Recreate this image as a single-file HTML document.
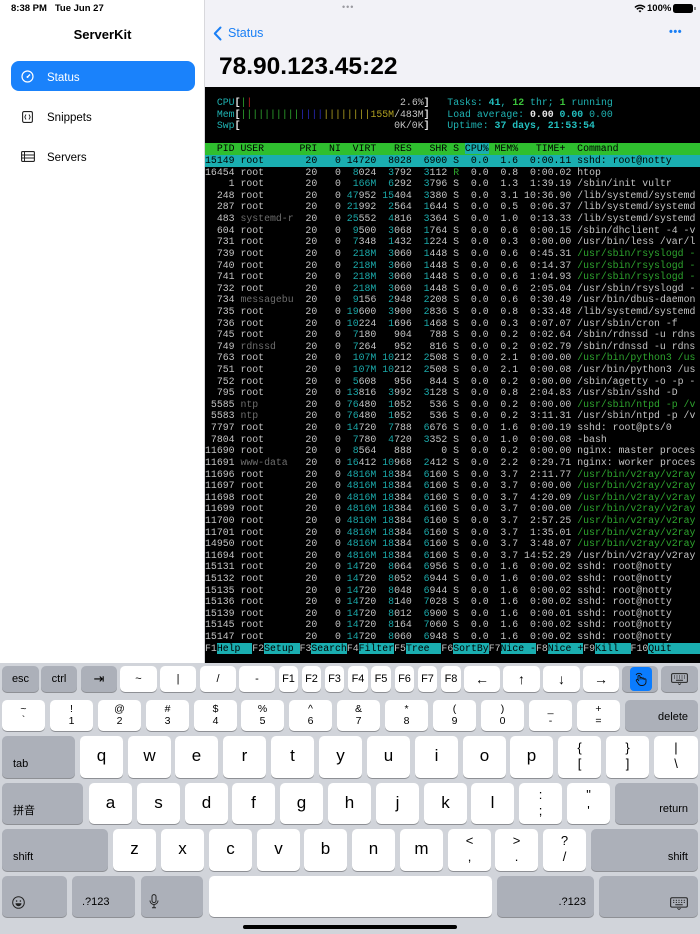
<!DOCTYPE html>
<html><head><meta charset="utf-8">
<style>
*{margin:0;padding:0;box-sizing:border-box}
body{width:700px;height:934px;overflow:hidden;position:relative;background:#f2f2f7;font-family:"Liberation Sans","Noto Sans CJK SC",sans-serif;color:#000}
.abs{position:absolute}
#side{left:0;top:0;width:205px;height:663px;background:#fff;border-right:1px solid #d8d8dc}
#term{left:205px;top:87px;width:495px;height:576px;background:#000;overflow:hidden}
#pre{position:absolute;left:0;top:10px;width:495px;font-family:"Liberation Mono",monospace;font-size:9.85px;line-height:11.62px;color:#c4c4c4;overflow:hidden}
#pre div{height:11.62px;overflow:hidden;white-space:pre}
#pre i{font-style:normal;color:#1aa7a8}
#pre b{font-weight:normal;color:#2ea52e}
#pre s{text-decoration:none;color:#6e6e6e}
.cy{color:#1fb3b3}.bw{color:#e8e8e8;font-weight:bold}.bg{color:#3cc43c;font-weight:bold}.bc{color:#23c0c0;font-weight:bold}
.r{color:#c02020}.gb{color:#2ea52e}.bl{color:#2828b8}.ye{color:#b0a020}
.hdr{background:#2fbf2f;color:#000}
.hdr u{text-decoration:none;background:#1aaeb0}
.sel{background:#1aaeb0;color:#000}
.fk a{background:#1aaeb0;color:#000}
#kb{left:0;top:663px;width:700px;height:271px;background:#d1d4da}
.k{position:absolute;background:#fff;border-radius:5px;box-shadow:0 1px 0 #8e9095;color:#000;text-align:center}
.s{background:#acb0b9}
.L{font-size:17px}
.t{font-size:11px}
</style></head><body>

<div id="side" class="abs"></div>
<div class="abs" style="left:11px;top:3px;font-size:9.5px;font-weight:bold">8:38 PM&nbsp;&nbsp; Tue Jun 27</div>
<div class="abs" style="left:342px;top:2px;font-size:9px;color:#9a9aa0;letter-spacing:1px">•••</div>
<svg class="abs" style="left:634px;top:4px" width="12" height="9" viewBox="0 0 12 9"><path d="M1 3.5a7 7 0 0 1 10 0M2.8 5.3a4.5 4.5 0 0 1 6.4 0" stroke="#000" stroke-width="1.5" fill="none"/><path d="M4.6 7a2 2 0 0 1 2.8 0L6 8.5z" fill="#000"/></svg>
<div class="abs" style="left:647px;top:3px;font-size:9.5px;font-weight:bold">100%</div>
<div class="abs" style="left:673px;top:4px;width:20px;height:9px;border-radius:2.5px;background:#000"></div>
<div class="abs" style="left:694px;top:7px;width:1.5px;height:3px;background:#888"></div>

<!-- sidebar -->
<div class="abs" style="left:0;width:205px;top:27px;text-align:center;font-size:13px;font-weight:bold">ServerKit</div>
<div class="abs" style="left:11px;top:61px;width:184px;height:30px;border-radius:8px;background:#1a82fb"></div>
<svg class="abs" style="left:21px;top:70px" width="13" height="13" viewBox="0 0 13 13"><circle cx="6.5" cy="6.5" r="5.5" stroke="#fff" stroke-width="1.2" fill="none"/><path d="M6.5 7L9 4.5" stroke="#fff" stroke-width="1.3"/><circle cx="6.5" cy="7" r="1" fill="#fff"/></svg>
<div class="abs" style="left:47px;top:72px;font-size:11.5px;line-height:13px;color:#fff">Status</div>
<svg class="abs" style="left:22px;top:111px" width="11" height="12" viewBox="0 0 11 12"><rect x="0.6" y="0.6" width="9.8" height="10.8" rx="1.5" stroke="#222" stroke-width="1.1" fill="none"/><path d="M4 3.5L2.8 6L4 8.5M7 3.5L8.2 6L7 8.5" stroke="#222" stroke-width="0.9" fill="none"/></svg>
<div class="abs" style="left:47px;top:112px;font-size:11.5px;line-height:13px">Snippets</div>
<svg class="abs" style="left:21px;top:151px" width="14" height="11" viewBox="0 0 14 11"><rect x="0.6" y="0.6" width="12.8" height="9.8" rx="1" stroke="#222" stroke-width="1.1" fill="none"/><path d="M0.6 4h12.8M0.6 7h12.8M3.5 0.6v9.8" stroke="#222" stroke-width="1"/></svg>
<div class="abs" style="left:47px;top:152px;font-size:11.5px;line-height:13px">Servers</div>

<!-- nav -->
<svg class="abs" style="left:213px;top:26px" width="9" height="15" viewBox="0 0 9 15"><path d="M7.5 1.5L1.8 7.5l5.7 6" stroke="#1a7ff5" stroke-width="2" fill="none" stroke-linecap="round" stroke-linejoin="round"/></svg>
<div class="abs" style="left:228px;top:26px;font-size:12.5px;color:#1a7ff5">Status</div>
<div class="abs" style="left:669px;top:26px;font-size:11px;color:#1a7ff5;font-weight:bold;letter-spacing:0.5px">•••</div>
<div class="abs" style="left:219px;top:53px;font-size:24.5px;font-weight:bold">78.90.123.45:22</div>

<!-- terminal -->
<div id="term" class="abs">
<div id="pre">
<div>  <span class="cy">CPU</span><span class="bw">[</span><span class="gb">|</span><span class="r">|</span>                         2.6%<span class="bw">]</span>   <span class="cy">Tasks: </span><span class="bc">41</span><span class="cy">, </span><span class="bg">12</span><span class="cy"> thr; </span><span class="bg">1</span><span class="cy"> running</span></div>
<div>  <span class="cy">Mem</span><span class="bw">[</span><span class="gb">||||||||||</span><span class="bl">||||</span><span class="ye">||||||||155M</span>/483M<span class="bw">]</span>   <span class="cy">Load average: </span><span class="bw">0.00 </span><span class="bc">0.00 </span><span class="cy">0.00</span></div>
<div>  <span class="cy">Swp</span><span class="bw">[</span>                          0K/0K<span class="bw">]</span>   <span class="cy">Uptime: </span><span class="bc">37 days, 21:53:54</span></div>
<div> </div>
<div class="hdr">  PID USER      PRI  NI  VIRT   RES   SHR S <u>CPU%</u> MEM%   TIME+  Command                        </div>
<div class="sel">15149 root       20   0 14720  8028  6900 S  0.0  1.6  0:00.11 sshd: root@notty                </div>
<div>16454 root       20   0  <i>8</i>024  <i>3</i>792  <i>3</i>112 <b>R</b>  0.0  0.8  0:00.02 htop</div>
<div>    1 root       20   0  <i>166M</i>  <i>6</i>292  <i>3</i>796 S  0.0  1.3  1:39.19 /sbin/init vultr</div>
<div>  248 root       20   0 <i>47</i>952 <i>15</i>404  <i>3</i>380 S  0.0  3.1 10:36.90 /lib/systemd/systemd</div>
<div>  287 root       20   0 <i>21</i>992  <i>2</i>564  <i>1</i>644 S  0.0  0.5  0:06.37 /lib/systemd/systemd</div>
<div>  483 <s>systemd-r</s>  20   0 <i>25</i>552  <i>4</i>816  <i>3</i>364 S  0.0  1.0  0:13.33 /lib/systemd/systemd</div>
<div>  604 root       20   0  <i>9</i>500  <i>3</i>068  <i>1</i>764 S  0.0  0.6  0:00.15 /sbin/dhclient -4 -v</div>
<div>  731 root       20   0  <i>7</i>348  <i>1</i>432  <i>1</i>224 S  0.0  0.3  0:00.00 /usr/bin/less /var/l</div>
<div>  739 root       20   0  <i>218M</i>  <i>3</i>060  <i>1</i>448 S  0.0  0.6  0:45.31 <b>/usr/sbin/rsyslogd -</b></div>
<div>  740 root       20   0  <i>218M</i>  <i>3</i>060  <i>1</i>448 S  0.0  0.6  0:14.37 <b>/usr/sbin/rsyslogd -</b></div>
<div>  741 root       20   0  <i>218M</i>  <i>3</i>060  <i>1</i>448 S  0.0  0.6  1:04.93 <b>/usr/sbin/rsyslogd -</b></div>
<div>  732 root       20   0  <i>218M</i>  <i>3</i>060  <i>1</i>448 S  0.0  0.6  2:05.04 /usr/sbin/rsyslogd -</div>
<div>  734 <s>messagebu</s>  20   0  <i>9</i>156  <i>2</i>948  <i>2</i>208 S  0.0  0.6  0:30.49 /usr/bin/dbus-daemon</div>
<div>  735 root       20   0 <i>19</i>600  <i>3</i>900  <i>2</i>836 S  0.0  0.8  0:33.48 /lib/systemd/systemd</div>
<div>  736 root       20   0 <i>10</i>224  <i>1</i>696  <i>1</i>468 S  0.0  0.3  0:07.07 /usr/sbin/cron -f</div>
<div>  745 root       20   0  <i>7</i>180   904   788 S  0.0  0.2  0:02.64 /sbin/rdnssd -u rdns</div>
<div>  749 <s>rdnssd</s>     20   0  <i>7</i>264   952   816 S  0.0  0.2  0:02.79 /sbin/rdnssd -u rdns</div>
<div>  763 root       20   0  <i>107M</i> <i>10</i>212  <i>2</i>508 S  0.0  2.1  0:00.00 <b>/usr/bin/python3 /us</b></div>
<div>  751 root       20   0  <i>107M</i> <i>10</i>212  <i>2</i>508 S  0.0  2.1  0:00.08 /usr/bin/python3 /us</div>
<div>  752 root       20   0  <i>5</i>608   956   844 S  0.0  0.2  0:00.00 /sbin/agetty -o -p -</div>
<div>  795 root       20   0 <i>13</i>816  <i>3</i>992  <i>3</i>128 S  0.0  0.8  2:04.83 /usr/sbin/sshd -D</div>
<div> 5585 <s>ntp</s>        20   0 <i>76</i>480  <i>1</i>052   536 S  0.0  0.2  0:00.00 <b>/usr/sbin/ntpd -p /v</b></div>
<div> 5583 <s>ntp</s>        20   0 <i>76</i>480  <i>1</i>052   536 S  0.0  0.2  3:11.31 /usr/sbin/ntpd -p /v</div>
<div> 7797 root       20   0 <i>14</i>720  <i>7</i>788  <i>6</i>676 S  0.0  1.6  0:00.19 sshd: root@pts/0</div>
<div> 7804 root       20   0  <i>7</i>780  <i>4</i>720  <i>3</i>352 S  0.0  1.0  0:00.08 -bash</div>
<div>11690 root       20   0  <i>8</i>564   888     0 S  0.0  0.2  0:00.00 nginx: master proces</div>
<div>11691 <s>www-data</s>   20   0 <i>16</i>412 <i>10</i>968  <i>2</i>412 S  0.0  2.2  0:29.71 nginx: worker proces</div>
<div>11696 root       20   0 <i>4816M</i> <i>18</i>384  <i>6</i>160 S  0.0  3.7  2:11.77 <b>/usr/bin/v2ray/v2ray</b></div>
<div>11697 root       20   0 <i>4816M</i> <i>18</i>384  <i>6</i>160 S  0.0  3.7  0:00.00 <b>/usr/bin/v2ray/v2ray</b></div>
<div>11698 root       20   0 <i>4816M</i> <i>18</i>384  <i>6</i>160 S  0.0  3.7  4:20.09 <b>/usr/bin/v2ray/v2ray</b></div>
<div>11699 root       20   0 <i>4816M</i> <i>18</i>384  <i>6</i>160 S  0.0  3.7  0:00.00 <b>/usr/bin/v2ray/v2ray</b></div>
<div>11700 root       20   0 <i>4816M</i> <i>18</i>384  <i>6</i>160 S  0.0  3.7  2:57.25 <b>/usr/bin/v2ray/v2ray</b></div>
<div>11701 root       20   0 <i>4816M</i> <i>18</i>384  <i>6</i>160 S  0.0  3.7  1:35.01 <b>/usr/bin/v2ray/v2ray</b></div>
<div>14950 root       20   0 <i>4816M</i> <i>18</i>384  <i>6</i>160 S  0.0  3.7  3:48.07 <b>/usr/bin/v2ray/v2ray</b></div>
<div>11694 root       20   0 <i>4816M</i> <i>18</i>384  <i>6</i>160 S  0.0  3.7 14:52.29 /usr/bin/v2ray/v2ray</div>
<div>15131 root       20   0 <i>14</i>720  <i>8</i>064  <i>6</i>956 S  0.0  1.6  0:00.02 sshd: root@notty</div>
<div>15132 root       20   0 <i>14</i>720  <i>8</i>052  <i>6</i>944 S  0.0  1.6  0:00.02 sshd: root@notty</div>
<div>15135 root       20   0 <i>14</i>720  <i>8</i>048  <i>6</i>944 S  0.0  1.6  0:00.02 sshd: root@notty</div>
<div>15136 root       20   0 <i>14</i>720  <i>8</i>140  <i>7</i>028 S  0.0  1.6  0:00.02 sshd: root@notty</div>
<div>15139 root       20   0 <i>14</i>720  <i>8</i>012  <i>6</i>900 S  0.0  1.6  0:00.01 sshd: root@notty</div>
<div>15145 root       20   0 <i>14</i>720  <i>8</i>164  <i>7</i>060 S  0.0  1.6  0:00.02 sshd: root@notty</div>
<div>15147 root       20   0 <i>14</i>720  <i>8</i>060  <i>6</i>948 S  0.0  1.6  0:00.02 sshd: root@notty</div>
<div class="fk">F1<a>Help  </a>F2<a>Setup </a>F3<a>Search</a>F4<a>Filter</a>F5<a>Tree  </a>F6<a>SortBy</a>F7<a>Nice -</a>F8<a>Nice +</a>F9<a>Kill  </a>F10<a>Quit                   </a></div>
</div>
</div>

<!-- keyboard -->
<div id="kb" class="abs"></div>
<div class="k s t" style="left:2px;top:666px;width:37px;height:26px;line-height:26px">esc</div>
<div class="k s t" style="left:41px;top:666px;width:36px;height:26px;line-height:26px">ctrl</div>
<div class="k s" style="left:81px;top:666px;width:36px;height:26px;line-height:26px;font-size:13px">⇥</div>
<div class="k t" style="left:120px;top:666px;width:37px;height:26px;line-height:26px">~</div>
<div class="k t" style="left:160px;top:666px;width:36px;height:26px;line-height:26px">|</div>
<div class="k t" style="left:200px;top:666px;width:36px;height:26px;line-height:26px">/</div>
<div class="k t" style="left:239px;top:666px;width:36px;height:26px;line-height:26px">-</div>
<div class="k t" style="left:279px;top:666px;width:19px;height:26px;line-height:26px">F1</div>
<div class="k t" style="left:302px;top:666px;width:19px;height:26px;line-height:26px">F2</div>
<div class="k t" style="left:325px;top:666px;width:19px;height:26px;line-height:26px">F3</div>
<div class="k t" style="left:348px;top:666px;width:20px;height:26px;line-height:26px">F4</div>
<div class="k t" style="left:371px;top:666px;width:20px;height:26px;line-height:26px">F5</div>
<div class="k t" style="left:395px;top:666px;width:19px;height:26px;line-height:26px">F6</div>
<div class="k t" style="left:418px;top:666px;width:19px;height:26px;line-height:26px">F7</div>
<div class="k t" style="left:441px;top:666px;width:20px;height:26px;line-height:26px">F8</div>
<div class="k" style="left:464px;top:666px;width:36px;height:26px;line-height:26px;font-size:14px">←</div>
<div class="k" style="left:503px;top:666px;width:37px;height:26px;line-height:26px;font-size:14px">↑</div>
<div class="k" style="left:543px;top:666px;width:37px;height:26px;line-height:26px;font-size:14px">↓</div>
<div class="k" style="left:583px;top:666px;width:36px;height:26px;line-height:26px;font-size:14px">→</div>
<div class="k s" style="left:622px;top:666px;width:36px;height:26px"></div>
<div class="abs" style="left:630px;top:667px;width:22px;height:24px;border-radius:4px;background:#0a7cff"></div>
<svg class="abs" style="left:634px;top:672px" width="14" height="14" viewBox="0 0 14 14"><path d="M4 8V4.5a1 1 0 0 1 2 0V7.5M6 6.5a1 1 0 0 1 2 0v1M8 7a1 1 0 0 1 2 0v1M10 7.8a1 1 0 0 1 2 0V10a3.5 3.5 0 0 1-3.5 3.5H7.5A3.5 3.5 0 0 1 4.5 12L2.5 9a1 1 0 0 1 1.6-1.2L5 9M2 3a3.5 3.5 0 0 1 6 0" stroke="#111" stroke-width="0.9" fill="none"/></svg>
<div class="k s" style="left:661px;top:666px;width:37px;height:26px"></div>
<svg class="abs" style="left:671px;top:673px" width="17" height="12" viewBox="0 0 17 12"><rect x="0.6" y="0.6" width="15.8" height="8.8" rx="1.3" stroke="#222" stroke-width="1" fill="none"/><path d="M3 3h1M5.5 3h1M8 3h1M10.5 3h1M13 3h1M3 5h1M5.5 5h1M8 5h1M10.5 5h1M13 5h1M5 7.2h7" stroke="#222" stroke-width="1"/><path d="M7 10.5l1.5 1.2 1.5-1.2" stroke="#222" stroke-width="0.8" fill="none"/></svg>

<div class="k" style="left:2px;top:700px;width:43px;height:31px;font-size:10.5px;line-height:11px;padding-top:4px">~<br>`</div>
<div class="k" style="left:50px;top:700px;width:43px;height:31px;font-size:10.5px;line-height:12px;padding-top:3px">!<br>1</div>
<div class="k" style="left:98px;top:700px;width:43px;height:31px;font-size:10.5px;line-height:12px;padding-top:3px">@<br>2</div>
<div class="k" style="left:146px;top:700px;width:43px;height:31px;font-size:10.5px;line-height:12px;padding-top:3px">#<br>3</div>
<div class="k" style="left:194px;top:700px;width:43px;height:31px;font-size:10.5px;line-height:12px;padding-top:3px">$<br>4</div>
<div class="k" style="left:241px;top:700px;width:43px;height:31px;font-size:10.5px;line-height:12px;padding-top:3px">%<br>5</div>
<div class="k" style="left:289px;top:700px;width:43px;height:31px;font-size:10.5px;line-height:12px;padding-top:3px">^<br>6</div>
<div class="k" style="left:337px;top:700px;width:43px;height:31px;font-size:10.5px;line-height:12px;padding-top:3px">&amp;<br>7</div>
<div class="k" style="left:385px;top:700px;width:43px;height:31px;font-size:10.5px;line-height:12px;padding-top:3px">*<br>8</div>
<div class="k" style="left:433px;top:700px;width:43px;height:31px;font-size:10.5px;line-height:12px;padding-top:3px">(<br>9</div>
<div class="k" style="left:481px;top:700px;width:43px;height:31px;font-size:10.5px;line-height:12px;padding-top:3px">)<br>0</div>
<div class="k" style="left:529px;top:700px;width:43px;height:31px;font-size:10.5px;line-height:12px;padding-top:3px">_<br>-</div>
<div class="k" style="left:577px;top:700px;width:43px;height:31px;font-size:10.5px;line-height:12px;padding-top:3px">+<br>=</div>
<div class="k s t" style="left:625px;top:700px;width:73px;height:31px;text-align:right;padding:11px 10px 0 0">delete</div>

<div class="k s t" style="left:2px;top:736px;width:73px;height:42px;text-align:left;padding:22px 0 0 11px">tab</div>
<div class="k L" style="left:80px;top:736px;width:43px;height:42px;line-height:40px">q</div>
<div class="k L" style="left:128px;top:736px;width:43px;height:42px;line-height:40px">w</div>
<div class="k L" style="left:175px;top:736px;width:43px;height:42px;line-height:40px">e</div>
<div class="k L" style="left:223px;top:736px;width:43px;height:42px;line-height:40px">r</div>
<div class="k L" style="left:271px;top:736px;width:43px;height:42px;line-height:40px">t</div>
<div class="k L" style="left:319px;top:736px;width:43px;height:42px;line-height:40px">y</div>
<div class="k L" style="left:367px;top:736px;width:43px;height:42px;line-height:40px">u</div>
<div class="k L" style="left:415px;top:736px;width:43px;height:42px;line-height:40px">i</div>
<div class="k L" style="left:463px;top:736px;width:43px;height:42px;line-height:40px">o</div>
<div class="k L" style="left:510px;top:736px;width:43px;height:42px;line-height:40px">p</div>
<div class="k" style="left:558px;top:736px;width:43px;height:42px;font-size:13px;line-height:16px;padding-top:4px">{<br>[</div>
<div class="k" style="left:606px;top:736px;width:43px;height:42px;font-size:13px;line-height:16px;padding-top:4px">}<br>]</div>
<div class="k" style="left:654px;top:736px;width:44px;height:42px;font-size:13px;line-height:16px;padding-top:4px">|<br>\</div>

<div class="k s t" style="left:2px;top:783px;width:81px;height:41px;text-align:left;padding:19px 0 0 11px">拼音</div>
<div class="k L" style="left:89px;top:783px;width:43px;height:41px;line-height:39px">a</div>
<div class="k L" style="left:137px;top:783px;width:43px;height:41px;line-height:39px">s</div>
<div class="k L" style="left:185px;top:783px;width:43px;height:41px;line-height:39px">d</div>
<div class="k L" style="left:232px;top:783px;width:43px;height:41px;line-height:39px">f</div>
<div class="k L" style="left:280px;top:783px;width:43px;height:41px;line-height:39px">g</div>
<div class="k L" style="left:328px;top:783px;width:43px;height:41px;line-height:39px">h</div>
<div class="k L" style="left:376px;top:783px;width:43px;height:41px;line-height:39px">j</div>
<div class="k L" style="left:424px;top:783px;width:43px;height:41px;line-height:39px">k</div>
<div class="k L" style="left:471px;top:783px;width:43px;height:41px;line-height:39px">l</div>
<div class="k" style="left:519px;top:783px;width:43px;height:41px;font-size:13px;line-height:16px;padding-top:4px">:<br>;</div>
<div class="k" style="left:567px;top:783px;width:43px;height:41px;font-size:13px;line-height:16px;padding-top:4px">"<br>'</div>
<div class="k s t" style="left:615px;top:783px;width:83px;height:41px;text-align:right;padding:20px 10px 0 0">return</div>

<div class="k s t" style="left:2px;top:829px;width:106px;height:42px;text-align:left;padding:22px 0 0 11px">shift</div>
<div class="k L" style="left:113px;top:829px;width:43px;height:42px;line-height:40px">z</div>
<div class="k L" style="left:161px;top:829px;width:43px;height:42px;line-height:40px">x</div>
<div class="k L" style="left:209px;top:829px;width:43px;height:42px;line-height:40px">c</div>
<div class="k L" style="left:257px;top:829px;width:43px;height:42px;line-height:40px">v</div>
<div class="k L" style="left:304px;top:829px;width:43px;height:42px;line-height:40px">b</div>
<div class="k L" style="left:352px;top:829px;width:43px;height:42px;line-height:40px">n</div>
<div class="k L" style="left:400px;top:829px;width:43px;height:42px;line-height:40px">m</div>
<div class="k" style="left:448px;top:829px;width:43px;height:42px;font-size:13px;line-height:16px;padding-top:4px">&lt;<br>,</div>
<div class="k" style="left:495px;top:829px;width:43px;height:42px;font-size:13px;line-height:16px;padding-top:4px">&gt;<br>.</div>
<div class="k" style="left:543px;top:829px;width:43px;height:42px;font-size:13px;line-height:16px;padding-top:4px">?<br>/</div>
<div class="k s t" style="left:591px;top:829px;width:107px;height:42px;text-align:right;padding:22px 10px 0 0">shift</div>

<div class="k s" style="left:2px;top:876px;width:65px;height:41px"></div>
<svg class="abs" style="left:12px;top:896px" width="13" height="13" viewBox="0 0 13 13"><circle cx="6.5" cy="6.5" r="5.8" stroke="#222" stroke-width="1" fill="none"/><circle cx="4.6" cy="5" r="0.8" fill="#222"/><circle cx="8.4" cy="5" r="0.8" fill="#222"/><path d="M3.5 7.3a3 3 0 0 0 6 0z" fill="#222"/></svg>
<div class="k s t" style="left:72px;top:876px;width:63px;height:41px;text-align:left;padding:20px 0 0 10px">.?123</div>
<div class="k s" style="left:141px;top:876px;width:62px;height:41px"></div>
<svg class="abs" style="left:149px;top:894px" width="10" height="15" viewBox="0 0 10 15"><rect x="3" y="0.6" width="4" height="8" rx="2" stroke="#222" stroke-width="1" fill="none"/><path d="M1 6.5a4 4 0 0 0 8 0M5 10.5v3M3 13.8h4" stroke="#222" stroke-width="1" fill="none"/></svg>
<div class="k" style="left:209px;top:876px;width:283px;height:41px"></div>
<div class="k s t" style="left:497px;top:876px;width:97px;height:41px;text-align:right;padding:20px 8px 0 0">.?123</div>
<div class="k s" style="left:599px;top:876px;width:99px;height:41px"></div>
<svg class="abs" style="left:670px;top:897px" width="18" height="13" viewBox="0 0 17 12"><rect x="0.6" y="0.6" width="15.8" height="8.8" rx="1.3" stroke="#222" stroke-width="1" fill="none"/><path d="M3 3h1M5.5 3h1M8 3h1M10.5 3h1M13 3h1M3 5h1M5.5 5h1M8 5h1M10.5 5h1M13 5h1M5 7.2h7" stroke="#222" stroke-width="1"/><path d="M7 10.5l1.5 1.2 1.5-1.2" stroke="#222" stroke-width="0.8" fill="none"/></svg>
<div class="abs" style="left:243px;top:925px;width:214px;height:4px;border-radius:2px;background:#000"></div>
</body></html>
